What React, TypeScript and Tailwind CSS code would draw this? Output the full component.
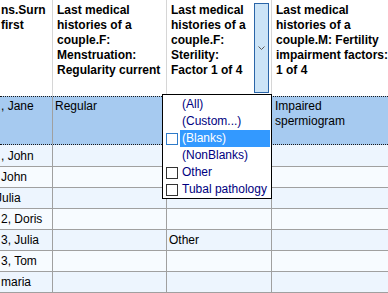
import React from "react";

const FONT = { fontFamily: '"Liberation Sans", Arial, sans-serif' };

type Row = { c0: string; c0ml?: number; c2?: string; bg: string };

const rows: Row[] = [
  { c0: ", John", bg: "bg-[#edf5fe]" },
  { c0: "John", bg: "bg-[#f7fbff]" },
  { c0: "Julia", c0ml: -5, bg: "bg-[#edf5fe]" },
  { c0: "2, Doris", bg: "bg-[#f7fbff]" },
  { c0: "3, Julia", c2: "Other", bg: "bg-[#edf5fe]" },
  { c0: "3, Tom", bg: "bg-[#f7fbff]" },
  { c0: "maria", bg: "bg-[#edf5fe]" },
];

function Check({ blue }: { blue?: boolean }) {
  return (
    <span
      className={
        "ml-[3px] mr-[2px] w-[12px] h-[12px] shrink-0 bg-white border " +
        (blue ? "border-[#2f7bc9]" : "border-[#333333]")
      }
    />
  );
}

function Item({
  label,
  check,
  selected,
  blueCheck,
}: {
  label: string;
  check?: boolean;
  selected?: boolean;
  blueCheck?: boolean;
}) {
  return (
    <div className="flex items-center h-[17px]">
      {check ? <Check blue={blueCheck} /> : <span className="w-[17px] shrink-0" />}
      <span
        className={
          "flex-1 h-[17px] leading-[17px] pl-[2px] mr-[1px] whitespace-nowrap " +
          (selected ? "bg-[#3399ff] text-white" : "text-[#000080]")
        }
      >
        {label}
      </span>
    </div>
  );
}

export default function App() {
  return (
    <div
      className="relative w-[388px] h-[293px] overflow-hidden bg-white text-[12px] text-black"
      style={FONT}
    >
      {/* Header */}
      <div className="flex h-[96px] font-bold leading-[15px]">
        <div className="w-[53px] shrink-0 border-r border-[#d6d6d6] pt-[3px] pl-[1px] overflow-hidden whitespace-nowrap">
          ns.Surn
          <br />
          first
        </div>
        <div className="w-[114px] shrink-0 border-r border-[#d6d6d6] pt-[3px] pl-[4px] overflow-hidden whitespace-nowrap">
          Last medical
          <br />
          histories of a
          <br />
          couple.F:
          <br />
          Menstruation:
          <br />
          Regularity current
        </div>
        <div className="relative w-[105px] shrink-0 border-r border-[#d6d6d6] pt-[3px] pl-[4px] overflow-hidden whitespace-nowrap">
          Last medical
          <br />
          histories of a
          <br />
          couple.F:
          <br />
          Sterility:
          <br />
          Factor 1 of 4
          <div className="absolute top-[3px] right-[2px] w-[15px] h-[90px] bg-[#cce4f7] border border-[#2a65a8] flex items-center justify-center">
            <svg width="7" height="5" viewBox="0 0 7 5">
              <path d="M0.5 0.5 L3.5 3.5 L6.5 0.5" fill="none" stroke="#5a5a5a" strokeWidth="1" />
            </svg>
          </div>
        </div>
        <div className="flex-1 pt-[3px] pl-[4px] overflow-hidden whitespace-nowrap">
          Last medical
          <br />
          histories of a
          <br />
          couple.M: Fertility
          <br />
          impairment factors:
          <br />
          1 of 4
        </div>
      </div>

      {/* Selected row */}
      <div className="flex h-[49px] bg-[#a6caf0] border-y border-dotted border-[#1a1a1a] leading-[15px]">
        <div className="w-[53px] shrink-0 border-r border-[#a0a0a0] pt-[2px] pl-[1px] overflow-hidden whitespace-nowrap">
          , Jane
        </div>
        <div className="w-[114px] shrink-0 border-r border-[#a0a0a0] pt-[2px] pl-[2px] overflow-hidden whitespace-nowrap">
          Regular
        </div>
        <div className="w-[105px] shrink-0 border-r border-[#a0a0a0] pt-[2px] pl-[2px]" />
        <div className="flex-1 pt-[2px] pl-[3px] overflow-hidden whitespace-nowrap">
          Impaired
          <br />
          spermiogram
        </div>
      </div>

      {/* Body rows */}
      {rows.map((r, i) => (
        <div
          key={i}
          className={
            "flex border-b border-[#a0a0a0] " + r.bg + (i === 0 ? " h-[22px]" : " h-[21px]")
          }
        >
          <div className="w-[53px] shrink-0 border-r border-[#a0a0a0] pl-[1px] overflow-hidden whitespace-nowrap flex items-center">
            <span style={r.c0ml ? { marginLeft: r.c0ml } : undefined}>{r.c0}</span>
          </div>
          <div className="w-[114px] shrink-0 border-r border-[#a0a0a0]" />
          <div className="w-[105px] shrink-0 border-r border-[#a0a0a0] pl-[2px] flex items-center whitespace-nowrap">
            {r.c2 ?? ""}
          </div>
          <div className="flex-1" />
        </div>
      ))}

      {/* Filter popup */}
      <div className="absolute left-[162px] top-[94px] w-[110px] h-[105px] bg-white border border-black pt-[1px]">
        <Item label="(All)" />
        <Item label="(Custom...)" />
        <Item label="(Blanks)" check blueCheck selected />
        <Item label="(NonBlanks)" />
        <Item label="Other" check />
        <Item label="Tubal pathology" check />
      </div>
    </div>
  );
}
